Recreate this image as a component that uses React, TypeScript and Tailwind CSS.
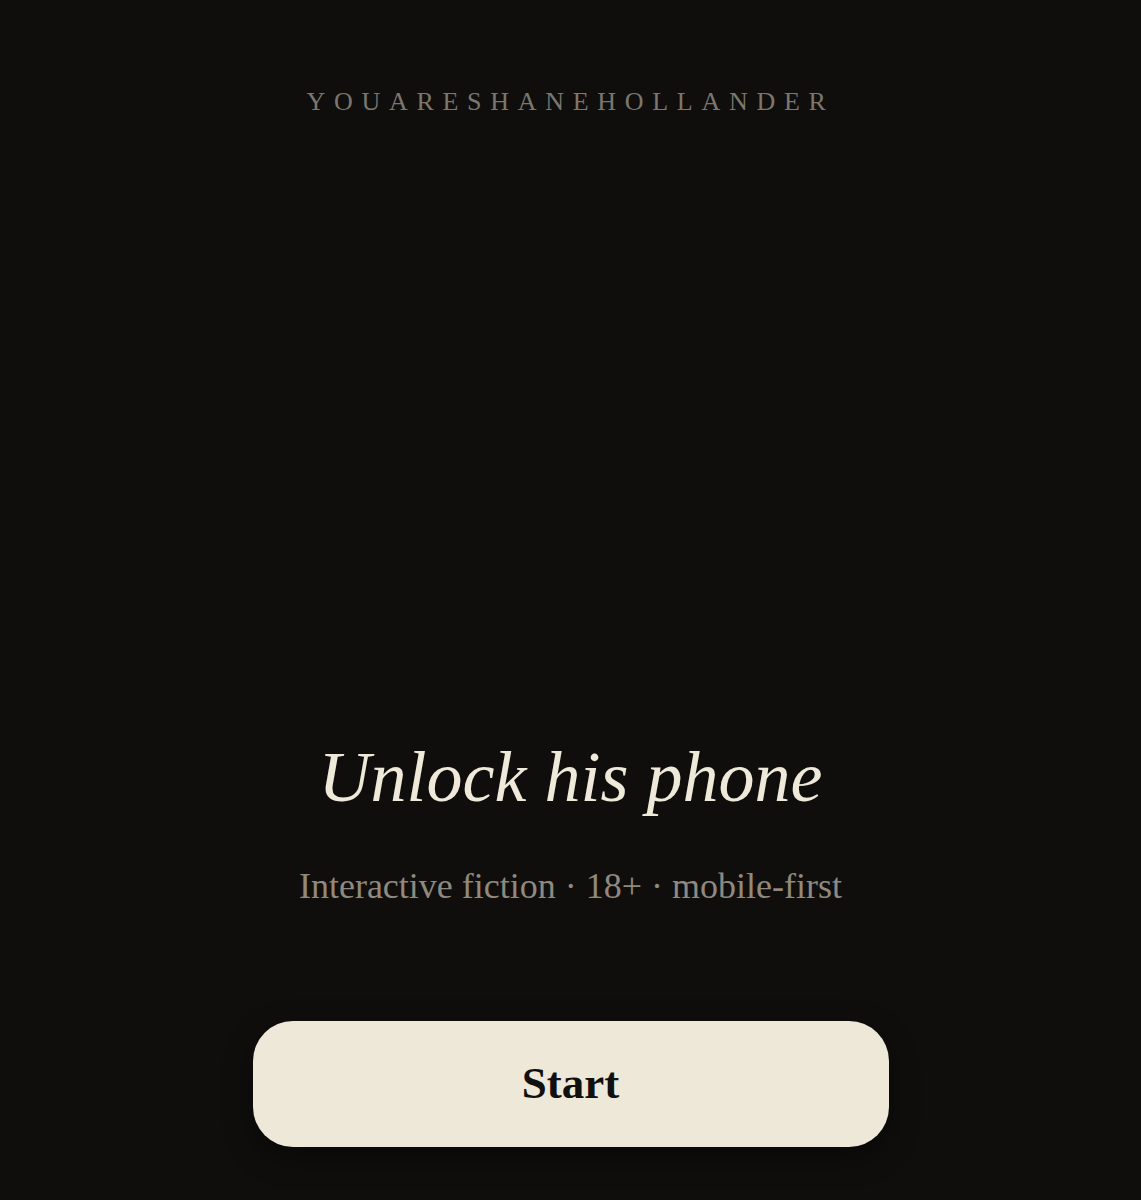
import React from 'react';

const serif = "font-['Liberation_Serif','Times_New_Roman',serif]";

const App: React.FC = () => {
  return (
    <div className={`min-h-[1200px] w-full bg-[#0f0e0d] flex flex-col items-center ${serif}`}>
      <div className="pt-[86px] text-[26px] leading-[32px] tracking-[0.335em] text-[#7c776d]">
        YOUARESHANEHOLLANDER
      </div>

      <h1 className="mt-[624px] text-[72px] leading-[70px] italic font-normal text-[#efe9da]">
        Unlock his phone
      </h1>

      <p className="mt-[57px] text-[36px] leading-[34px] text-[#8f897e]">
        Interactive fiction · 18+ · mobile-first
      </p>

      <button className="mt-[118px] w-[636px] h-[126px] rounded-[40px] bg-[#eee8d8] text-[#111010] text-[45px] font-bold shadow-[0_10px_30px_rgba(0,0,0,0.4)]">
        Start
      </button>
    </div>
  );
};

export default App;
